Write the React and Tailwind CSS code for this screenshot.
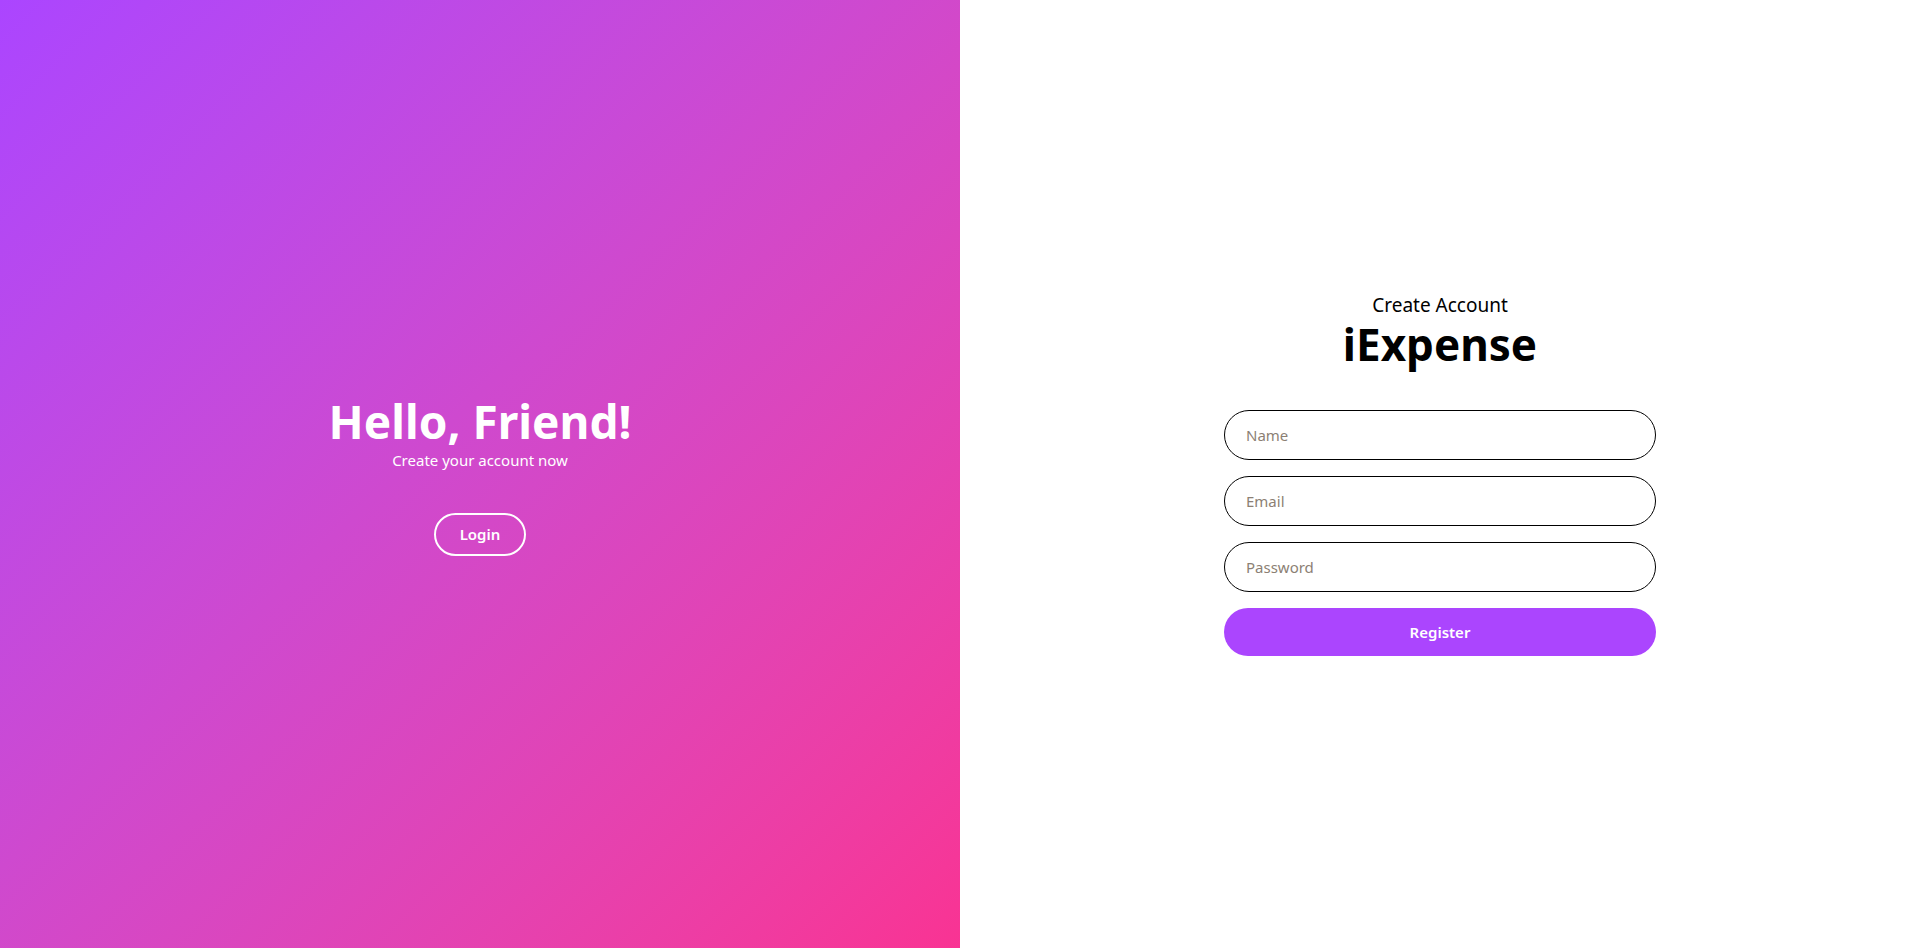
export default function App() {
  return (
    <div className="flex h-[948px] w-full" style={{ fontFamily: '"Noto Sans", "Open Sans", sans-serif' }}>
      <div className="flex w-1/2 flex-col items-center justify-center bg-gradient-to-br from-[#ab45ff] to-[#f93393] text-white">
        <h1 className="text-[46px] font-bold leading-[56px]">Hello, Friend!</h1>
        <p className="mt-0 text-[15px] leading-[22px]">Create your account now</p>
        <button className="mt-[42px] h-[43px] w-[92px] rounded-full border-2 border-white text-[15px] font-semibold">Login</button>
      </div>
      <div className="flex w-1/2 flex-col items-center justify-center bg-white">
        <p className="text-[19px] leading-[26px] text-black">Create Account</p>
        <h2 className="text-[44px] font-bold leading-[52px] text-black">iExpense</h2>
        <form className="mt-[40px] flex w-[432px] flex-col gap-4">
          <input className="h-[50px] rounded-full border border-black px-[21px] text-[15px] outline-none placeholder:text-[#8c7f74]" placeholder="Name" />
          <input className="h-[50px] rounded-full border border-black px-[21px] text-[15px] outline-none placeholder:text-[#8c7f74]" placeholder="Email" />
          <input className="h-[50px] rounded-full border border-black px-[21px] text-[15px] outline-none placeholder:text-[#8c7f74]" placeholder="Password" />
          <button type="button" className="h-[48px] rounded-full bg-[#ab45fe] text-[15px] font-semibold text-white">Register</button>
        </form>
      </div>
    </div>
  );
}
